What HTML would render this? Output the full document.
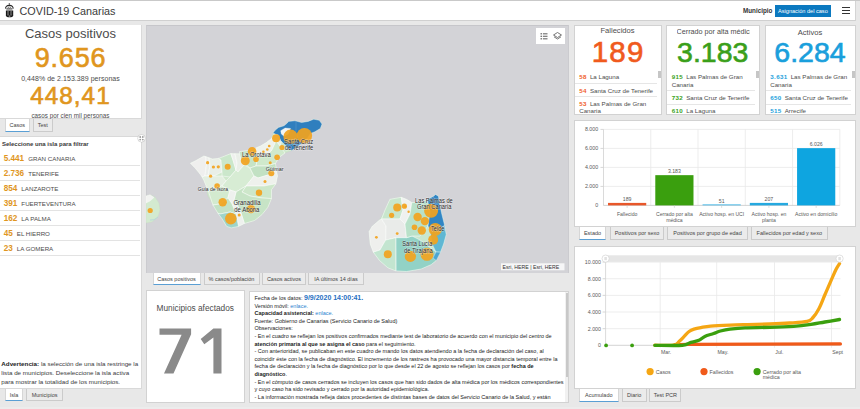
<!DOCTYPE html>
<html><head><meta charset="utf-8">
<style>
*{margin:0;padding:0;box-sizing:border-box}
html,body{width:860px;height:409px;overflow:hidden;background:#e8e8e8;font-family:"Liberation Sans",sans-serif;color:#4c4c4c}
.a{position:absolute}
.panel{position:absolute;background:#fff;border:1px solid #d2d2d2}
.c{text-align:center;white-space:nowrap}
.nw{white-space:nowrap}
.tab{position:absolute;height:12.5px;background:#ebebeb;border:1px solid #cbcbcb;border-top:none;font-size:5.5px;color:#444;text-align:center;line-height:12px;white-space:nowrap}
.tab.sel{background:#fff;border:none;border-left:1px solid #d6d6d6;border-right:1px solid #d6d6d6;border-bottom:1.5px solid #5a9fd4;line-height:12px;height:12.6px}
.big{-webkit-text-stroke:0.65px currentColor}
</style></head><body>

<div class="a" style="left:0;top:0;width:860px;height:1px;background:#c9c9c9"></div>
<div class="a" style="left:0;top:1px;width:856px;height:20px;background:#fff;border-right:1px solid #d4d4d4;border-bottom:1px solid #d0d0d0"></div>
<div class="a nw" style="left:19.5px;top:5px;font-size:10.8px;line-height:13px;color:#3a3a3a">COVID-19 Canarias</div>
<div class="a nw" style="left:743px;top:7px;font-size:6.3px;font-weight:bold;color:#333;line-height:8px">Municipio</div>
<div class="a" style="left:775px;top:4.5px;width:56px;height:12px;background:#0b79c0"></div>
<div class="a nw" style="left:778px;top:6.5px;font-size:5.6px;color:#fff;line-height:8px">Asignación del caso</div>
<div class="a" style="left:842px;top:6.8px;width:8px;height:1px;background:#333"></div>
<div class="a" style="left:842px;top:9.9px;width:8px;height:1px;background:#333"></div>
<div class="a" style="left:842px;top:12.9px;width:8px;height:1px;background:#333"></div>
<svg class="a" style="left:0;top:0" width="20" height="21" viewBox="0 0 20 21">
<path d="M9.35,3.2 V4.9 M8.7,3.9 H10" stroke="#333" stroke-width="0.6"/>
<path d="M5.6,8.6 Q5.3,5.6 9.35,5.4 Q13.4,5.6 13.1,8.6" fill="none" stroke="#262626" stroke-width="1.1"/>
<path d="M7.6,8.4 L8.35,7.1 L9.1,8.4 M9.6,8.4 L10.35,7.1 L11.1,8.4" fill="none" stroke="#555" stroke-width="0.6"/>
<rect x="6.3" y="8.5" width="6.1" height="0.9" fill="#1e1e1e"/>
<path d="M5.9,10.4 H13.2 V15.2 Q13.2,17.2 9.55,17.2 Q5.9,17.2 5.9,15.2 Z" fill="#161616"/>
<rect x="7.1" y="11.2" width="1.9" height="4.2" fill="#6e6e6e"/>
<rect x="10.2" y="11.2" width="1.9" height="4.2" fill="#6e6e6e"/>
<rect x="7.65" y="12" width="0.8" height="2.6" fill="#3a3a3a"/>
<rect x="10.75" y="12" width="0.8" height="2.6" fill="#3a3a3a"/>
<ellipse cx="9.55" cy="16.1" rx="1" ry="0.6" fill="#aaa"/>
</svg>


<div class="a" style="left:0;top:25px;width:141.5px;height:94px;background:#fff;border-right:1px solid #d9d9d9;border-bottom:1px solid #d9d9d9"></div>
<div class="a c" style="left:0;width:141px;top:26px;font-size:13px;line-height:16px;color:#4c4c4c">Casos positivos</div>
<div class="a c big" style="left:0;width:141px;top:43px;font-size:27px;line-height:30px;color:#e0961e;letter-spacing:0.8px">9.656</div>
<div class="a c" style="left:0;width:141px;top:73.7px;font-size:7px;line-height:9px;color:#4c4c4c;letter-spacing:0.05px">0,448% de 2.153.389 personas</div>
<div class="a c big" style="left:0;width:141px;top:82.3px;font-size:24.3px;line-height:28px;color:#e0961e;letter-spacing:1px">448,41</div>
<div class="a c" style="left:0;width:141px;top:112px;font-size:6.3px;line-height:8px;color:#4c4c4c">casos por cien mil personas</div>
<div class="tab sel" style="left:4.5px;top:119px;width:25.5px">Casos</div>
<div class="tab" style="left:32.5px;top:119px;width:20.5px">Test</div>
<div class="a" style="left:0;top:136px;width:141.5px;height:252.5px;background:#fff;border-top:1px solid #d9d9d9;border-right:1px solid #d9d9d9;border-bottom:1px solid #d9d9d9"></div>
<div class="a nw" style="left:2px;top:139.8px;font-size:6px;font-weight:bold;line-height:8px;color:#3a3a3a">Seleccione una isla para filtrar</div>
<div class="a nw" style="left:3.7px;top:153.5px;font-size:8.2px;line-height:9px"><b style="color:#e0961e">5.441</b><span style="font-size:6.2px;color:#4c4c4c;margin-left:4px">GRAN CANARIA</span></div>
<div class="a" style="left:0;top:165px;width:140px;height:1px;background:#e3e3e3"></div>
<div class="a nw" style="left:3.7px;top:168.5px;font-size:8.2px;line-height:9px"><b style="color:#e0961e">2.736</b><span style="font-size:6.2px;color:#4c4c4c;margin-left:4px">TENERIFE</span></div>
<div class="a" style="left:0;top:180px;width:140px;height:1px;background:#e3e3e3"></div>
<div class="a nw" style="left:3.7px;top:183.5px;font-size:8.2px;line-height:9px"><b style="color:#e0961e">854</b><span style="font-size:6.2px;color:#4c4c4c;margin-left:4px">LANZAROTE</span></div>
<div class="a" style="left:0;top:195px;width:140px;height:1px;background:#e3e3e3"></div>
<div class="a nw" style="left:3.7px;top:198.5px;font-size:8.2px;line-height:9px"><b style="color:#e0961e">391</b><span style="font-size:6.2px;color:#4c4c4c;margin-left:4px">FUERTEVENTURA</span></div>
<div class="a" style="left:0;top:210px;width:140px;height:1px;background:#e3e3e3"></div>
<div class="a nw" style="left:3.7px;top:213.5px;font-size:8.2px;line-height:9px"><b style="color:#e0961e">162</b><span style="font-size:6.2px;color:#4c4c4c;margin-left:4px">LA PALMA</span></div>
<div class="a" style="left:0;top:225px;width:140px;height:1px;background:#e3e3e3"></div>
<div class="a nw" style="left:3.7px;top:228.5px;font-size:8.2px;line-height:9px"><b style="color:#e0961e">45</b><span style="font-size:6.2px;color:#4c4c4c;margin-left:4px">EL HIERRO</span></div>
<div class="a" style="left:0;top:240px;width:140px;height:1px;background:#e3e3e3"></div>
<div class="a nw" style="left:3.7px;top:243.5px;font-size:8.2px;line-height:9px"><b style="color:#e0961e">23</b><span style="font-size:6.2px;color:#4c4c4c;margin-left:4px">LA GOMERA</span></div>
<div class="a" style="left:0;top:255px;width:140px;height:1px;background:#e3e3e3"></div>

<div class="a nw" style="left:1.3px;top:358.7px;font-size:6.25px;line-height:9.3px;color:#3a3a3a">
<b style="color:#222">Advertencia:</b> la selección de una isla restringe la<br>lista de municipios. Deseleccione la isla activa<br>para mostrar la totalidad de los municipios.</div>
<div class="tab sel" style="left:4.8px;top:388.5px;width:18.5px">Isla</div>
<div class="tab" style="left:25.8px;top:388.5px;width:37.7px">Municipios</div>


<div class="a" style="left:146px;top:25px;width:423px;height:247.5px;background:#d3d3d7;border-top:1px solid #c6c6ca;border-left:1px solid #cbcbcf;border-right:1px solid #cbcbcf"></div>
<div class="tab sel" style="left:152.5px;top:272.5px;width:48px">Casos positivos</div>
<div class="tab" style="left:203.5px;top:272.5px;width:56px">% casos/población</div>
<div class="tab" style="left:262px;top:272.5px;width:44px">Casos activos</div>
<div class="tab" style="left:308px;top:272.5px;width:56px">IA últimos 14 días</div>


<div class="panel" style="left:146px;top:290px;width:98.5px;height:112.5px"></div>
<div class="a c" style="left:146px;width:98.5px;top:302.5px;font-size:8.3px;line-height:11px;color:#4c4c4c">Municipios afectados</div>
<svg class="a" style="left:0;top:0" width="860" height="409" viewBox="0 0 860 409"><polygon points="159.5,328.5 191.1,328.5 191.1,334.2 173.5,373.6 164,373.6 181.6,334.7 159.5,334.7" fill="#8a8a8a"/><polygon points="213.4,328.5 221.5,328.5 221.5,373.6 213.4,373.6 213.4,337.6 204.3,344.2 200.7,339.1" fill="#8a8a8a"/></svg>
<div class="panel" style="left:249px;top:290.5px;width:320px;height:112px;overflow:hidden"><div style="position:absolute;left:4.5px;top:2.40px;font-size:5.5px;line-height:8px;white-space:nowrap;color:#222"><span style="color:#222">Fecha de los datos: </span><b style="color:#1f6fc2;font-size:7px">9/9/2020 14:00:41.</b></div>
<div style="position:absolute;left:4.5px;top:10.00px;font-size:5.5px;line-height:8px;white-space:nowrap;color:#222">Versión móvil: <span style="color:#2a7fd0">enlace.</span></div>
<div style="position:absolute;left:4.5px;top:17.60px;font-size:5.5px;line-height:8px;white-space:nowrap;color:#222"><b>Capacidad asistencial:</b> <span style="color:#2a7fd0">enlace.</span></div>
<div style="position:absolute;left:4.5px;top:25.20px;font-size:5.5px;line-height:8px;white-space:nowrap;color:#222">Fuente: Gobierno de Canarias (Servicio Canario de Salud)</div>
<div style="position:absolute;left:4.5px;top:32.80px;font-size:5.5px;line-height:8px;white-space:nowrap;color:#222">Observaciones:</div>
<div style="position:absolute;left:4.5px;top:40.40px;font-size:5.5px;line-height:8px;white-space:nowrap;color:#222">- En el cuadro se reflejan los positivos confirmados mediante test de laboratorio de acuerdo con el municipio del centro de</div>
<div style="position:absolute;left:4.5px;top:48.00px;font-size:5.5px;line-height:8px;white-space:nowrap;color:#222"><b>atención primaria al que se asigna el caso</b> para el seguimiento.</div>
<div style="position:absolute;left:4.5px;top:55.60px;font-size:5.5px;line-height:8px;white-space:nowrap;color:#222">- Con anterioridad, se publicaban en este cuadro de mando los datos atendiendo a la fecha de declaración del caso, al</div>
<div style="position:absolute;left:4.5px;top:63.20px;font-size:5.5px;line-height:8px;white-space:nowrap;color:#222">coincidir éste con la fecha de diagnóstico. El incremento de los rastreos ha provocado una mayor distancia temporal entre la</div>
<div style="position:absolute;left:4.5px;top:70.80px;font-size:5.5px;line-height:8px;white-space:nowrap;color:#222">fecha de declaración y la fecha de diagnóstico por lo que desde el 22 de agosto se reflejan los casos por <b>fecha de</b></div>
<div style="position:absolute;left:4.5px;top:78.40px;font-size:5.5px;line-height:8px;white-space:nowrap;color:#222"><b>diagnóstico</b>.</div>
<div style="position:absolute;left:4.5px;top:86.00px;font-size:5.5px;line-height:8px;white-space:nowrap;color:#222">- En el cómputo de casos cerrados se incluyen los casos que han sido dados de alta médica por los médicos correspondientes</div>
<div style="position:absolute;left:4.5px;top:93.60px;font-size:5.5px;line-height:8px;white-space:nowrap;color:#222">y cuyo caso ha sido revisado y cerrado por la autoridad epidemiológica.</div>
<div style="position:absolute;left:4.5px;top:101.20px;font-size:5.5px;line-height:8px;white-space:nowrap;color:#222">- La información mostrada refleja datos procedentes de distintas bases de datos del Servicio Canario de la Salud, y están</div>
<div style="position:absolute;right:0;top:0;width:3px;height:110px;background:#f1f1f1"></div>
<div style="position:absolute;right:0.5px;top:1px;width:2px;height:84px;background:#c8c8c8"></div></div>


<div class="panel" style="left:573.5px;top:25px;width:88px;height:89.5px"></div>
<div class="panel" style="left:666px;top:25px;width:93.5px;height:89.5px"></div>
<div class="panel" style="left:764.5px;top:25px;width:91px;height:89.5px"></div>
<div class="a c" style="left:573.5px;width:88px;top:26.2px;font-size:7.6px;line-height:9px">Fallecidos</div>
<div class="a c big" style="left:573.5px;width:88px;top:36.3px;font-size:29.5px;line-height:32px;color:#f05a1e;letter-spacing:1.2px;padding-left:1.2px">189</div>
<div class="a nw" style="left:676.6px;width:73.6px;top:27.3px;font-size:7.2px;line-height:9px;overflow:hidden">Cerrado por alta médica</div>
<div class="a c big" style="left:666px;width:93.5px;top:36px;font-size:28.5px;line-height:32px;color:#3a9f1a">3.183</div>
<div class="a c" style="left:764.5px;width:91px;top:28px;font-size:7.6px;line-height:9px">Activos</div>
<div class="a c big" style="left:764.5px;width:91px;top:36px;font-size:28.5px;line-height:32px;color:#1a9fdc">6.284</div>
<div class="a" style="left:574.5px;top:70px;width:86px;height:44px;overflow:hidden"><div style="position:absolute;left:4.7px;top:3.45px;width:76px;font-size:6.2px;line-height:7.5px;color:#4c4c4c"><span style="color:#f05a1e;letter-spacing:0.4px;font-weight:bold">58</span><span style="margin-left:3px">La Laguna</span></div><div style="position:absolute;left:0;top:12.75px;width:82px;height:1px;background:#e6e6e6"></div><div style="position:absolute;left:4.7px;top:16.7px;width:76px;font-size:6.2px;line-height:7.5px;color:#4c4c4c"><span style="color:#f05a1e;letter-spacing:0.4px;font-weight:bold">54</span><span style="margin-left:3px">Santa Cruz de Tenerife</span></div><div style="position:absolute;left:0;top:26.0px;width:82px;height:1px;background:#e6e6e6"></div><div style="position:absolute;left:4.7px;top:29.95px;width:76px;font-size:6.2px;line-height:7.5px;color:#4c4c4c"><span style="color:#f05a1e;letter-spacing:0.4px;font-weight:bold">53</span><span style="margin-left:3px">Las Palmas de Gran Canaria</span></div><div style="position:absolute;left:0;top:46.75px;width:82px;height:1px;background:#e6e6e6"></div><div style="position:absolute;left:83px;top:1px;width:3px;height:7px;background:#c6c6c6"></div></div>
<div class="a" style="left:667px;top:70px;width:91.5px;height:44px;overflow:hidden"><div style="position:absolute;left:4.7px;top:3.45px;width:81.5px;font-size:6.2px;line-height:7.5px;color:#4c4c4c"><span style="color:#3a9f1a;letter-spacing:0.4px;font-weight:bold">915</span><span style="margin-left:3px">Las Palmas de Gran Canaria</span></div><div style="position:absolute;left:0;top:20.25px;width:87.5px;height:1px;background:#e6e6e6"></div><div style="position:absolute;left:4.7px;top:24.2px;width:81.5px;font-size:6.2px;line-height:7.5px;color:#4c4c4c"><span style="color:#3a9f1a;letter-spacing:0.4px;font-weight:bold">732</span><span style="margin-left:3px">Santa Cruz de Tenerife</span></div><div style="position:absolute;left:0;top:33.5px;width:87.5px;height:1px;background:#e6e6e6"></div><div style="position:absolute;left:4.7px;top:37.45px;width:81.5px;font-size:6.2px;line-height:7.5px;color:#4c4c4c"><span style="color:#3a9f1a;letter-spacing:0.4px;font-weight:bold">610</span><span style="margin-left:3px">La Laguna</span></div><div style="position:absolute;left:0;top:46.75px;width:87.5px;height:1px;background:#e6e6e6"></div><div style="position:absolute;left:88.5px;top:1px;width:3px;height:7px;background:#c6c6c6"></div></div>
<div class="a" style="left:765.5px;top:70px;width:89px;height:44px;overflow:hidden"><div style="position:absolute;left:4.7px;top:3.45px;width:79px;font-size:6.2px;line-height:7.5px;color:#4c4c4c"><span style="color:#1a9fdc;letter-spacing:0.4px;font-weight:bold">3.631</span><span style="margin-left:3px">Las Palmas de Gran Canaria</span></div><div style="position:absolute;left:0;top:20.25px;width:85px;height:1px;background:#e6e6e6"></div><div style="position:absolute;left:4.7px;top:24.2px;width:79px;font-size:6.2px;line-height:7.5px;color:#4c4c4c"><span style="color:#1a9fdc;letter-spacing:0.4px;font-weight:bold">650</span><span style="margin-left:3px">Santa Cruz de Tenerife</span></div><div style="position:absolute;left:0;top:33.5px;width:85px;height:1px;background:#e6e6e6"></div><div style="position:absolute;left:4.7px;top:37.45px;width:79px;font-size:6.2px;line-height:7.5px;color:#4c4c4c"><span style="color:#1a9fdc;letter-spacing:0.4px;font-weight:bold">515</span><span style="margin-left:3px">Arrecife</span></div><div style="position:absolute;left:0;top:46.75px;width:85px;height:1px;background:#e6e6e6"></div><div style="position:absolute;left:86px;top:1px;width:3px;height:7px;background:#c6c6c6"></div></div>


<div class="panel" style="left:573.5px;top:119.5px;width:282px;height:107.5px"></div>
<div class="tab sel" style="left:579px;top:227px;width:27px">Estado</div>
<div class="tab" style="left:610px;top:227px;width:54px">Positivos por sexo</div>
<div class="tab" style="left:667px;top:227px;width:81px">Positivos por grupo de edad</div>
<div class="tab" style="left:751px;top:227px;width:76.5px">Fallecidos por edad y sexo</div>


<div class="panel" style="left:573.5px;top:245.5px;width:282px;height:143.5px"></div>
<div class="tab sel" style="left:579px;top:389px;width:39.5px">Acumulado</div>
<div class="tab" style="left:622px;top:389px;width:24.5px">Diario</div>
<div class="tab" style="left:649.4px;top:389px;width:32px">Test PCR</div>

<div class="a" style="left:0;top:407px;width:860px;height:2px;background:#ececec"></div>
<svg class="a" style="left:0;top:0" width="860" height="409" viewBox="0 0 860 409"><defs><clipPath id="mc"><rect x="146" y="25" width="423" height="247.5"/></clipPath></defs>
<g clip-path="url(#mc)">
<polygon points="190.4,163.3 196.0,160.5 203.9,156.0 205.7,156.6 212.4,159.0 218.6,158.4 224.7,156.0 230.8,153.6 239.3,153.8 245.0,152.0 247.7,150.4 254.6,148.5 260.4,146.0 266.3,142.6 271.2,138.7 273.0,132.9 275.2,130.2 278.5,127.4 284.0,125.8 287.3,123.0 288.4,121.4 295.0,120.8 301.6,122.5 308.2,121.4 313.7,119.2 319.2,120.3 322.0,124.1 320.3,128.5 314.8,131.8 310.4,133.5 308.2,137.3 303.8,141.7 295.0,148.3 291.7,150.5 285.0,153.0 279.0,157.5 275.5,163.5 276.5,170.0 277.5,176.0 275.9,183.8 271.5,189.7 271.5,198.5 267.9,207.3 262.0,214.6 254.6,220.5 244.4,223.5 238.5,226.4 231.2,227.9 226.7,226.4 222.3,219.1 217.9,213.2 212.9,205.0 207.6,195.0 206.3,186.6 203.9,180.5 200.2,174.3 195.3,168.2" fill="#cfe8cc" stroke="#c4d9c2" stroke-width="0.4" />
<polygon points="190.4,163.3 196.0,160.5 203.9,156.0 205.7,156.6 206.5,165.0 205.0,176.0 202.0,177.0 200.2,174.3 195.3,168.2" fill="#efefee" stroke="#ffffff" stroke-width="0.5" />
<polygon points="205.7,156.6 209.0,157.8 210.0,166.0 208.0,176.0 205.0,176.0 206.5,165.0" fill="#eceeeb" stroke="#ffffff" stroke-width="0.5" />
<polygon points="209.0,157.8 212.4,159.0 218.6,158.4 221.0,160.0 222.0,172.0 214.0,176.0 208.0,176.0 210.0,166.0" fill="#e9efe7" stroke="#ffffff" stroke-width="0.5" />
<polygon points="218.6,158.4 224.7,156.0 230.8,153.6 233.0,160.0 236.0,170.0 230.0,177.0 222.0,176.0 222.0,172.0 221.0,160.0" fill="#cbe7cb" stroke="#ffffff" stroke-width="0.5" />
<polygon points="230.8,153.6 235.0,153.7 237.0,163.0 236.0,170.0 233.0,160.0" fill="#eef0ed" stroke="#ffffff" stroke-width="0.5" />
<polygon points="235.0,153.7 239.3,153.8 245.0,152.0 244.0,165.0 238.0,172.0 236.0,170.0 237.0,163.0" fill="#eaefe8" stroke="#ffffff" stroke-width="0.5" />
<polygon points="202.0,177.0 205.0,176.0 214.0,176.0 222.0,176.0 226.0,181.0 222.0,186.0 208.5,191.3 206.3,186.6 203.9,180.5" fill="#e4efe1" stroke="#ffffff" stroke-width="0.5" />
<polygon points="208.5,191.3 222.0,186.0 230.0,190.0 228.0,198.0 220.0,204.0 212.9,205.0" fill="#d3eacf" stroke="#ffffff" stroke-width="0.5" />
<polygon points="226.0,181.0 230.0,177.0 236.0,170.0 238.0,172.0 244.0,165.0 250.0,168.0 254.0,176.0 246.0,186.0 236.0,192.0 230.0,190.0 222.0,186.0" fill="#d7ecd4" stroke="#ffffff" stroke-width="0.5" />
<polygon points="239.3,151.7 247.7,150.4 254.6,148.5 258.0,156.0 256.0,166.0 250.0,168.0 241.0,160.0" fill="#c7e4c7" stroke="#ffffff" stroke-width="0.5" />
<polygon points="254.6,148.5 260.4,146.0 266.3,142.6 271.2,138.7 276.0,141.0 272.0,150.0 266.0,156.0 258.0,156.0" fill="#eef2ec" stroke="#ffffff" stroke-width="0.5" />
<polygon points="271.2,138.7 274.1,134.8 277.1,130.9 281.0,127.0 283.0,137.0 280.0,146.0 276.0,141.0" fill="#e6f0e3" stroke="#ffffff" stroke-width="0.5" />
<polygon points="258.0,156.0 266.0,156.0 272.0,150.0 276.0,141.0 280.0,146.0 285.0,153.0 279.0,157.5 275.5,163.5 266.0,166.0 256.0,166.0" fill="#d0e9cc" stroke="#ffffff" stroke-width="0.5" />
<polygon points="256.0,166.0 266.0,166.0 275.5,163.5 276.5,170.0 268.0,175.0 258.0,178.0 254.0,176.0 250.0,168.0" fill="#c2e1c3" stroke="#ffffff" stroke-width="0.5" />
<polygon points="254.0,176.0 258.0,178.0 268.0,175.0 276.5,170.0 277.5,176.0 275.9,183.8 264.0,186.0 254.0,186.0 246.0,186.0" fill="#eef1ec" stroke="#ffffff" stroke-width="0.5" />
<polygon points="246.0,186.0 254.0,186.0 264.0,186.0 275.9,183.8 271.5,189.7 271.5,198.5 262.0,198.0 250.0,196.0 242.0,192.0" fill="#cde7ca" stroke="#ffffff" stroke-width="0.5" />
<polygon points="236.0,192.0 246.0,186.0 242.0,192.0 250.0,196.0 262.0,198.0 271.5,198.5 267.9,207.3 262.0,214.6 254.6,220.5 244.4,223.5 240.0,210.0 234.0,200.0" fill="#c7e4c6" stroke="#ffffff" stroke-width="0.5" />
<polygon points="228.0,198.0 230.0,190.0 236.0,192.0 234.0,200.0 240.0,210.0 244.4,223.5 238.5,226.4 236.0,214.0 232.0,204.0" fill="#eef1ee" stroke="#ffffff" stroke-width="0.5" />
<polygon points="212.9,205.0 220.0,204.0 228.0,198.0 232.0,204.0 236.0,214.0 230.0,212.0 220.0,214.0 217.9,213.2" fill="#c3e2c6" stroke="#ffffff" stroke-width="0.5" />
<polygon points="217.9,213.2 220.0,214.0 230.0,212.0 236.0,214.0 238.5,226.4 231.2,227.9 226.7,226.4 222.3,219.1" fill="#9fd4c9" stroke="#ffffff" stroke-width="0.5" />
<polygon points="273.0,132.9 275.2,130.2 278.5,127.4 284.0,125.8 287.3,123.0 288.4,121.4 295.0,120.8 301.6,122.5 308.2,121.4 313.7,119.2 319.2,120.3 322.0,124.1 320.3,128.5 314.8,131.8 310.4,133.5 308.2,137.3 303.8,141.7 295.0,148.3 291.7,150.5 288.4,148.3 285.1,145.0 280.7,140.6 278.5,135.1 275.2,134.0" fill="#2f7fbe" stroke="#ffffff" stroke-width="0.35" />
<line x1="296" y1="121" x2="296" y2="132" stroke="#6aa5d6" stroke-width="0.4"/>
<polygon points="280.7,130.7 285.1,128.0 290.6,128.5 288.4,134.0 284.0,136.2 281.3,134.0" fill="#f3f5f3" stroke="#ffffff" stroke-width="0.3" />
<polygon points="146.0,196.0 150.0,194.7 155.0,197.0 159.0,203.0 160.0,210.0 158.0,217.0 152.0,222.0 146.0,223.0" fill="#d3ead0" stroke="#c9dcc6" stroke-width="0.4" />
<polygon points="146.0,196.0 150.0,194.7 154.0,197.5 150.0,201.0 146.0,203.0" fill="#f2f3f1" stroke="#ffffff" stroke-width="0.35" />
<path d="M150,220 Q154,221 158,217" stroke="#b9d9d9" stroke-width="1" fill="none"/>
<polygon points="389.9,199.3 401.3,197.3 406.5,199.3 411.8,202.5 421.1,202.5 427.4,199.4 433.6,196.2 435.5,194.5 438.4,196.2 439.4,202.4 441.5,212.8 444.6,225.3 446.2,234.6 443.6,244.0 440.5,252.2 436.3,260.5 431.1,264.7 421.1,269.0 406.6,271.5 396.1,270.9 387.8,267.8 379.5,260.5 373.3,252.2 370.2,243.9 369.1,231.5 372.3,226.3 379.5,220.1 384.7,210.7" fill="#c9e7cf" stroke="#c4d9c2" stroke-width="0.4" />
<polygon points="389.9,199.3 401.3,197.3 403.0,210.0 400.0,219.0 388.0,219.0 381.6,219.0 384.7,210.7" fill="#c8e6cc" stroke="#ffffff" stroke-width="0.5" />
<polygon points="401.3,197.3 406.5,199.3 411.8,202.5 410.0,214.0 405.0,224.0 400.0,219.0 403.0,210.0" fill="#eff1ef" stroke="#ffffff" stroke-width="0.5" />
<polygon points="369.1,231.5 372.3,226.3 379.5,220.1 381.6,219.0 386.0,226.0 385.7,240.0 380.0,250.0 373.3,252.2 370.2,243.9" fill="#eeefed" stroke="#ffffff" stroke-width="0.5" />
<polygon points="381.6,219.0 388.0,219.0 400.0,219.0 405.0,224.0 406.5,237.7 396.0,237.7 386.0,240.0 385.7,240.0 386.0,226.0" fill="#e9ebe9" stroke="#ffffff" stroke-width="0.5" />
<polygon points="373.3,252.2 380.0,250.0 385.7,240.0 386.0,240.0 396.0,237.7 396.0,271.0 387.8,267.8 379.5,260.5" fill="#c3e5d0" stroke="#ffffff" stroke-width="0.5" />
<polygon points="396.0,237.7 406.5,237.7 412.0,236.0 420.0,240.0 428.0,246.0 436.0,252.0 436.3,260.5 431.1,264.7 421.1,269.0 406.6,271.5 396.1,270.9" fill="#92d2c6" stroke="#ffffff" stroke-width="0.5" />
<polygon points="410.0,214.0 411.8,202.5 421.1,202.5 427.4,199.4 430.0,212.0 428.0,226.0 420.0,236.0 412.0,236.0 406.5,237.7 405.0,224.0" fill="#b9e1c9" stroke="#ffffff" stroke-width="0.5" />
<polygon points="430.0,230.0 438.0,230.0 444.6,225.3 446.2,234.6 443.6,244.0 440.5,252.2 436.0,252.0 432.0,244.0" fill="#5fb7d3" stroke="#ffffff" stroke-width="0.4" />
<polygon points="427.4,199.4 433.6,196.2 435.5,194.5 438.4,196.2 439.4,202.4 441.5,212.8 444.6,225.3 438.0,230.0 430.0,230.0 428.0,226.0 430.0,212.0" fill="#3085c4" stroke="#ffffff" stroke-width="0.4" />
<polygon points="436.3,260.5 440.5,252.2 436.0,252.0 433.0,258.0" fill="#4aa6d2" stroke="#ffffff" stroke-width="0.3" />
<circle cx="290.6" cy="136.8" r="7.2" fill="#f2a31e" fill-opacity="0.92"/>
<circle cx="304.4" cy="135.7" r="7.7" fill="#f2a31e" fill-opacity="0.92"/>
<circle cx="276.1" cy="138.2" r="4" fill="#f2a31e" fill-opacity="0.92"/>
<circle cx="282" cy="147.5" r="2.6" fill="#f2a31e" fill-opacity="0.92"/>
<circle cx="252.1" cy="151.4" r="4.3" fill="#f2a31e" fill-opacity="0.92"/>
<circle cx="245.3" cy="160.7" r="4.5" fill="#f2a31e" fill-opacity="0.92"/>
<circle cx="256" cy="159.2" r="2.8" fill="#f2a31e" fill-opacity="0.92"/>
<circle cx="277.1" cy="157.3" r="2.8" fill="#f2a31e" fill-opacity="0.92"/>
<circle cx="269.2" cy="146" r="1.3" fill="#f2a31e" fill-opacity="0.92"/>
<circle cx="267.3" cy="149.5" r="1.3" fill="#f2a31e" fill-opacity="0.92"/>
<circle cx="263.4" cy="151.9" r="1.3" fill="#f2a31e" fill-opacity="0.92"/>
<circle cx="270.2" cy="162.7" r="1.5" fill="#f2a31e" fill-opacity="0.92"/>
<circle cx="271.3" cy="173.2" r="3" fill="#f2a31e" fill-opacity="0.92"/>
<circle cx="265" cy="181.5" r="1.5" fill="#f2a31e" fill-opacity="0.92"/>
<circle cx="259" cy="192.7" r="3.2" fill="#f2a31e" fill-opacity="0.92"/>
<circle cx="251" cy="209" r="4.2" fill="#f2a31e" fill-opacity="0.92"/>
<circle cx="207.6" cy="162.7" r="1.6" fill="#f2a31e" fill-opacity="0.92"/>
<circle cx="213.4" cy="167" r="1.6" fill="#f2a31e" fill-opacity="0.92"/>
<circle cx="218.3" cy="166.8" r="1.6" fill="#f2a31e" fill-opacity="0.92"/>
<circle cx="227.7" cy="166.8" r="3" fill="#f2a31e" fill-opacity="0.92"/>
<circle cx="210.6" cy="176.2" r="1.6" fill="#f2a31e" fill-opacity="0.92"/>
<circle cx="217.1" cy="186" r="2.8" fill="#f2a31e" fill-opacity="0.92"/>
<circle cx="222.7" cy="202.3" r="4.2" fill="#f2a31e" fill-opacity="0.92"/>
<circle cx="230.8" cy="218.6" r="5.8" fill="#f2a31e" fill-opacity="0.92"/>
<circle cx="239.2" cy="214.9" r="1.5" fill="#f2a31e" fill-opacity="0.92"/>
<circle cx="150.2" cy="210.5" r="2.6" fill="#f2a31e" fill-opacity="0.92"/>
<circle cx="397.2" cy="207.6" r="4" fill="#f2a31e" fill-opacity="0.92"/>
<circle cx="404.4" cy="206.2" r="2.6" fill="#f2a31e" fill-opacity="0.92"/>
<circle cx="391.6" cy="215.3" r="2.6" fill="#f2a31e" fill-opacity="0.92"/>
<circle cx="408.6" cy="211.8" r="1.2" fill="#f2a31e" fill-opacity="0.92"/>
<circle cx="405.2" cy="206.6" r="1.0" fill="#f2a31e" fill-opacity="0.92"/>
<circle cx="417.6" cy="217" r="4.2" fill="#f2a31e" fill-opacity="0.92"/>
<circle cx="424.9" cy="221.1" r="4.2" fill="#f2a31e" fill-opacity="0.92"/>
<circle cx="431.1" cy="210.7" r="7" fill="#f2a31e" fill-opacity="0.92"/>
<circle cx="414.5" cy="227.3" r="2.8" fill="#f2a31e" fill-opacity="0.92"/>
<circle cx="421.8" cy="230.5" r="4.2" fill="#f2a31e" fill-opacity="0.92"/>
<circle cx="435.3" cy="229.4" r="6.5" fill="#f2a31e" fill-opacity="0.92"/>
<circle cx="433.2" cy="239.8" r="5" fill="#f2a31e" fill-opacity="0.92"/>
<circle cx="427" cy="254.3" r="6.5" fill="#f2a31e" fill-opacity="0.92"/>
<circle cx="410.4" cy="256.4" r="5.6" fill="#f2a31e" fill-opacity="0.92"/>
<circle cx="387.8" cy="254.3" r="4" fill="#f2a31e" fill-opacity="0.92"/>
<circle cx="376.4" cy="237.3" r="1.4" fill="#f2a31e" fill-opacity="0.92"/>
<circle cx="397.2" cy="233.6" r="1.4" fill="#f2a31e" fill-opacity="0.92"/>
<text x="284" y="143.6" font-family="Liberation Sans" font-size="6.5" textLength="29.2" lengthAdjust="spacingAndGlyphs" fill="none" stroke="#ffffff" stroke-opacity="0.5" stroke-width="0.9" stroke-linejoin="round">Santa Cruz</text><text x="284" y="143.6" font-family="Liberation Sans" font-size="6.5" textLength="29.2" lengthAdjust="spacingAndGlyphs" fill="#262626">Santa Cruz</text>
<text x="284.7" y="149.6" font-family="Liberation Sans" font-size="6.5" textLength="28.6" lengthAdjust="spacingAndGlyphs" fill="none" stroke="#ffffff" stroke-opacity="0.5" stroke-width="0.9" stroke-linejoin="round">de Tenerife</text><text x="284.7" y="149.6" font-family="Liberation Sans" font-size="6.5" textLength="28.6" lengthAdjust="spacingAndGlyphs" fill="#262626">de Tenerife</text>
<text x="242" y="157.2" font-family="Liberation Sans" font-size="6.5" textLength="28.7" lengthAdjust="spacingAndGlyphs" fill="none" stroke="#ffffff" stroke-opacity="0.5" stroke-width="0.9" stroke-linejoin="round">La Orotava</text><text x="242" y="157.2" font-family="Liberation Sans" font-size="6.5" textLength="28.7" lengthAdjust="spacingAndGlyphs" fill="#262626">La Orotava</text>
<text x="265.7" y="171.3" font-family="Liberation Sans" font-size="5.6" textLength="17.8" lengthAdjust="spacingAndGlyphs" fill="none" stroke="#ffffff" stroke-opacity="0.5" stroke-width="0.9" stroke-linejoin="round">Güímar</text><text x="265.7" y="171.3" font-family="Liberation Sans" font-size="5.6" textLength="17.8" lengthAdjust="spacingAndGlyphs" fill="#262626">Güímar</text>
<text x="197.8" y="191.3" font-family="Liberation Sans" font-size="5.6" textLength="30.2" lengthAdjust="spacingAndGlyphs" fill="none" stroke="#ffffff" stroke-opacity="0.5" stroke-width="0.9" stroke-linejoin="round">Guía de Isora</text><text x="197.8" y="191.3" font-family="Liberation Sans" font-size="5.6" textLength="30.2" lengthAdjust="spacingAndGlyphs" fill="#262626">Guía de Isora</text>
<text x="233.4" y="205.2" font-family="Liberation Sans" font-size="6.5" textLength="27.2" lengthAdjust="spacingAndGlyphs" fill="none" stroke="#ffffff" stroke-opacity="0.5" stroke-width="0.9" stroke-linejoin="round">Granadilla</text><text x="233.4" y="205.2" font-family="Liberation Sans" font-size="6.5" textLength="27.2" lengthAdjust="spacingAndGlyphs" fill="#262626">Granadilla</text>
<text x="234.3" y="211.7" font-family="Liberation Sans" font-size="6.5" textLength="25" lengthAdjust="spacingAndGlyphs" fill="none" stroke="#ffffff" stroke-opacity="0.5" stroke-width="0.9" stroke-linejoin="round">de Abona</text><text x="234.3" y="211.7" font-family="Liberation Sans" font-size="6.5" textLength="25" lengthAdjust="spacingAndGlyphs" fill="#262626">de Abona</text>
<text x="415.1" y="203.3" font-family="Liberation Sans" font-size="6.5" textLength="37.7" lengthAdjust="spacingAndGlyphs" fill="none" stroke="#ffffff" stroke-opacity="0.5" stroke-width="0.9" stroke-linejoin="round">Las Palmas de</text><text x="415.1" y="203.3" font-family="Liberation Sans" font-size="6.5" textLength="37.7" lengthAdjust="spacingAndGlyphs" fill="#262626">Las Palmas de</text>
<text x="417" y="209.2" font-family="Liberation Sans" font-size="6.5" textLength="34.4" lengthAdjust="spacingAndGlyphs" fill="none" stroke="#ffffff" stroke-opacity="0.5" stroke-width="0.9" stroke-linejoin="round">Gran Canaria</text><text x="417" y="209.2" font-family="Liberation Sans" font-size="6.5" textLength="34.4" lengthAdjust="spacingAndGlyphs" fill="#262626">Gran Canaria</text>
<text x="431.1" y="230.6" font-family="Liberation Sans" font-size="6.5" textLength="13.3" lengthAdjust="spacingAndGlyphs" fill="none" stroke="#ffffff" stroke-opacity="0.5" stroke-width="0.9" stroke-linejoin="round">Telde</text><text x="431.1" y="230.6" font-family="Liberation Sans" font-size="6.5" textLength="13.3" lengthAdjust="spacingAndGlyphs" fill="#262626">Telde</text>
<text x="402.3" y="245.9" font-family="Liberation Sans" font-size="6.5" textLength="30" lengthAdjust="spacingAndGlyphs" fill="none" stroke="#ffffff" stroke-opacity="0.5" stroke-width="0.9" stroke-linejoin="round">Santa Lucía</text><text x="402.3" y="245.9" font-family="Liberation Sans" font-size="6.5" textLength="30" lengthAdjust="spacingAndGlyphs" fill="#262626">Santa Lucía</text>
<text x="404" y="252.6" font-family="Liberation Sans" font-size="6.5" textLength="28.6" lengthAdjust="spacingAndGlyphs" fill="none" stroke="#ffffff" stroke-opacity="0.5" stroke-width="0.9" stroke-linejoin="round">de Tirajana</text><text x="404" y="252.6" font-family="Liberation Sans" font-size="6.5" textLength="28.6" lengthAdjust="spacingAndGlyphs" fill="#262626">de Tirajana</text>
<rect x="501" y="263.3" width="63.5" height="7" fill="#ffffff" fill-opacity="0.8"/>
<text x="502.5" y="269" font-family="Liberation Sans" font-size="5.2" fill="#333">Esri, HERE | Esri, HERE</text>
</g>
<rect x="536" y="28" width="29" height="16" fill="#ffffff"/>
<rect x="540.5" y="33.2" width="1.6" height="1.2" fill="#666"/><rect x="543" y="33.2" width="4.5" height="1.2" fill="#777"/>
<rect x="540.5" y="35.7" width="1.6" height="1.2" fill="#666"/><rect x="543" y="35.7" width="4.5" height="1.2" fill="#777"/>
<rect x="540.5" y="38.2" width="1.6" height="1.2" fill="#666"/><rect x="543" y="38.2" width="4.5" height="1.2" fill="#777"/>
<path d="M557.5,32.5 L561.5,35 L557.5,37.5 L553.5,35 Z" fill="none" stroke="#666" stroke-width="0.9"/>
<path d="M554,36.8 L557.5,39 L561,36.8" fill="none" stroke="#666" stroke-width="0.9"/>
<circle cx="141.5" cy="138.3" r="3.8" fill="#ffffff" stroke="#b5b5b5" stroke-width="0.5"/>
<path d="M141.5,135.2 V141.4 M138.4,138.3 H144.6" stroke="#ffffff" stroke-width="1.1"/>
<circle cx="140.2" cy="137" r="0.9" fill="#9a9a9a"/><circle cx="142.8" cy="137" r="0.9" fill="#9a9a9a"/><circle cx="140.2" cy="139.6" r="0.9" fill="#9a9a9a"/><circle cx="142.8" cy="139.6" r="0.9" fill="#9a9a9a"/><line x1="603.5" y1="186.40" x2="839.8" y2="186.40" stroke="#e8e8e8" stroke-width="0.8"/>
<line x1="600.5" y1="186.40" x2="603.5" y2="186.40" stroke="#bbb" stroke-width="0.6"/>
<text x="598.2" y="188.30" font-family="Liberation Sans" font-size="5.3" fill="#595959" text-anchor="end">2.000</text>
<line x1="603.5" y1="167.40" x2="839.8" y2="167.40" stroke="#e8e8e8" stroke-width="0.8"/>
<line x1="600.5" y1="167.40" x2="603.5" y2="167.40" stroke="#bbb" stroke-width="0.6"/>
<text x="598.2" y="169.30" font-family="Liberation Sans" font-size="5.3" fill="#595959" text-anchor="end">4.000</text>
<line x1="603.5" y1="148.40" x2="839.8" y2="148.40" stroke="#e8e8e8" stroke-width="0.8"/>
<line x1="600.5" y1="148.40" x2="603.5" y2="148.40" stroke="#bbb" stroke-width="0.6"/>
<text x="598.2" y="150.30" font-family="Liberation Sans" font-size="5.3" fill="#595959" text-anchor="end">6.000</text>
<line x1="603.5" y1="129.40" x2="839.8" y2="129.40" stroke="#e8e8e8" stroke-width="0.8"/>
<line x1="600.5" y1="129.40" x2="603.5" y2="129.40" stroke="#bbb" stroke-width="0.6"/>
<text x="598.2" y="131.30" font-family="Liberation Sans" font-size="5.3" fill="#595959" text-anchor="end">8.000</text>
<text x="598.2" y="207.30" font-family="Liberation Sans" font-size="5.3" fill="#595959" text-anchor="end">0</text>
<line x1="650.76" y1="129.40" x2="650.76" y2="205.4" stroke="#e8e8e8" stroke-width="0.8"/>
<line x1="698.02" y1="129.40" x2="698.02" y2="205.4" stroke="#e8e8e8" stroke-width="0.8"/>
<line x1="745.28" y1="129.40" x2="745.28" y2="205.4" stroke="#e8e8e8" stroke-width="0.8"/>
<line x1="792.54" y1="129.40" x2="792.54" y2="205.4" stroke="#e8e8e8" stroke-width="0.8"/>
<line x1="839.80" y1="129.40" x2="839.80" y2="205.4" stroke="#e8e8e8" stroke-width="0.8"/>
<line x1="603.5" y1="129.40" x2="603.5" y2="205.4" stroke="#d0d0d0" stroke-width="0.8"/>
<line x1="603.5" y1="205.40" x2="839.8" y2="205.40" stroke="#c8c8c8" stroke-width="0.8"/>
<rect x="608.03" y="202.90" width="38.2" height="2.50" fill="#e8572a"/>
<text x="627.13" y="201.10" font-family="Liberation Sans" font-size="5.2" fill="#595959" text-anchor="middle">189</text>
<line x1="627.13" y1="205.4" x2="627.13" y2="207.9" stroke="#c8c8c8" stroke-width="0.6"/>
<text x="627.13" y="216.20" font-family="Liberation Sans" font-size="5.1" fill="#595959" text-anchor="middle">Fallecido</text>
<rect x="655.29" y="175.16" width="38.2" height="30.24" fill="#3a9f0e"/>
<text x="674.39" y="173.36" font-family="Liberation Sans" font-size="5.2" fill="#595959" text-anchor="middle">3.183</text>
<line x1="674.39" y1="205.4" x2="674.39" y2="207.9" stroke="#c8c8c8" stroke-width="0.6"/>
<text x="674.39" y="216.20" font-family="Liberation Sans" font-size="5.1" fill="#595959" text-anchor="middle">Cerrado por alta</text>
<text x="674.39" y="222.00" font-family="Liberation Sans" font-size="5.1" fill="#595959" text-anchor="middle">médica</text>
<rect x="702.55" y="204.30" width="38.2" height="1.10" fill="#5cc0ea"/>
<text x="721.65" y="202.50" font-family="Liberation Sans" font-size="5.2" fill="#595959" text-anchor="middle">51</text>
<line x1="721.65" y1="205.4" x2="721.65" y2="207.9" stroke="#c8c8c8" stroke-width="0.6"/>
<text x="721.65" y="216.20" font-family="Liberation Sans" font-size="5.1" fill="#595959" text-anchor="middle">Activo hosp. en UCI</text>
<rect x="749.81" y="202.90" width="38.2" height="2.50" fill="#25a9e0"/>
<text x="768.91" y="201.10" font-family="Liberation Sans" font-size="5.2" fill="#595959" text-anchor="middle">207</text>
<line x1="768.91" y1="205.4" x2="768.91" y2="207.9" stroke="#c8c8c8" stroke-width="0.6"/>
<text x="768.91" y="216.20" font-family="Liberation Sans" font-size="5.1" fill="#595959" text-anchor="middle">Activo hosp. en</text>
<text x="768.91" y="222.00" font-family="Liberation Sans" font-size="5.1" fill="#595959" text-anchor="middle">planta</text>
<rect x="797.07" y="148.15" width="38.2" height="57.25" fill="#0ea5e0"/>
<text x="816.17" y="146.35" font-family="Liberation Sans" font-size="5.2" fill="#595959" text-anchor="middle">6.026</text>
<line x1="816.17" y1="205.4" x2="816.17" y2="207.9" stroke="#c8c8c8" stroke-width="0.6"/>
<text x="816.17" y="216.20" font-family="Liberation Sans" font-size="5.1" fill="#595959" text-anchor="middle">Activo en domicilio</text>
<rect x="604" y="255.3" width="236.5" height="6.6" fill="#e6e6e6"/>
<line x1="605.6" y1="328.66" x2="840.5" y2="328.66" stroke="#e8e8e8" stroke-width="0.8"/>
<line x1="602.6" y1="328.66" x2="605.6" y2="328.66" stroke="#bbb" stroke-width="0.6"/>
<text x="601" y="330.56" font-family="Liberation Sans" font-size="5.3" fill="#595959" text-anchor="end">2.000</text>
<line x1="605.6" y1="312.02" x2="840.5" y2="312.02" stroke="#e8e8e8" stroke-width="0.8"/>
<line x1="602.6" y1="312.02" x2="605.6" y2="312.02" stroke="#bbb" stroke-width="0.6"/>
<text x="601" y="313.92" font-family="Liberation Sans" font-size="5.3" fill="#595959" text-anchor="end">4.000</text>
<line x1="605.6" y1="295.38" x2="840.5" y2="295.38" stroke="#e8e8e8" stroke-width="0.8"/>
<line x1="602.6" y1="295.38" x2="605.6" y2="295.38" stroke="#bbb" stroke-width="0.6"/>
<text x="601" y="297.28" font-family="Liberation Sans" font-size="5.3" fill="#595959" text-anchor="end">6.000</text>
<line x1="605.6" y1="278.74" x2="840.5" y2="278.74" stroke="#e8e8e8" stroke-width="0.8"/>
<line x1="602.6" y1="278.74" x2="605.6" y2="278.74" stroke="#bbb" stroke-width="0.6"/>
<text x="601" y="280.64" font-family="Liberation Sans" font-size="5.3" fill="#595959" text-anchor="end">8.000</text>
<line x1="605.6" y1="262.10" x2="840.5" y2="262.10" stroke="#e8e8e8" stroke-width="0.8"/>
<line x1="602.6" y1="262.10" x2="605.6" y2="262.10" stroke="#bbb" stroke-width="0.6"/>
<text x="601" y="264.00" font-family="Liberation Sans" font-size="5.3" fill="#595959" text-anchor="end">10.000</text>
<text x="601" y="347.20" font-family="Liberation Sans" font-size="5.3" fill="#595959" text-anchor="end">0</text>
<line x1="660.2" y1="262.1" x2="660.2" y2="347.8" stroke="#e8e8e8" stroke-width="0.8"/>
<text x="661.0" y="354.3" font-family="Liberation Sans" font-size="5.2" fill="#595959">Mar.</text>
<line x1="716.7" y1="262.1" x2="716.7" y2="347.8" stroke="#e8e8e8" stroke-width="0.8"/>
<text x="717.5" y="354.3" font-family="Liberation Sans" font-size="5.2" fill="#595959">May.</text>
<line x1="774.5" y1="262.1" x2="774.5" y2="347.8" stroke="#e8e8e8" stroke-width="0.8"/>
<text x="775.3" y="354.3" font-family="Liberation Sans" font-size="5.2" fill="#595959">Jul.</text>
<line x1="831.5" y1="262.1" x2="831.5" y2="347.8" stroke="#e8e8e8" stroke-width="0.8"/>
<text x="832.3" y="354.3" font-family="Liberation Sans" font-size="5.2" fill="#595959">Sept</text>
<line x1="605.6" y1="262.1" x2="605.6" y2="345.3" stroke="#d0d0d0" stroke-width="0.8"/>
<line x1="605.6" y1="345.3" x2="840.5" y2="345.3" stroke="#c8c8c8" stroke-width="0.8"/>
<path d="M680.0,345.3 C681.5,345.1 662.3,344.6 689.0,344.4 C715.7,344.2 815.2,344.0 840.4,343.9" fill="none" stroke="#f05a1a" stroke-width="3.3" stroke-linecap="round"/>
<path d="M654.8,345.2 C657.9,345.2 669.4,345.8 673.5,345.2 C677.6,344.6 677.5,342.8 679.3,341.3 C681.1,339.8 682.6,338.0 684.2,336.4 C685.8,334.8 687.5,332.7 689.1,331.5 C690.7,330.3 692.0,329.8 694.0,329.1 C696.0,328.5 698.1,328.1 700.9,327.6 C703.7,327.1 705.8,326.5 710.6,326.1 C715.5,325.7 723.8,325.4 730.0,325.2 C736.2,324.9 740.9,324.8 747.6,324.6 C754.3,324.4 763.0,324.3 770.0,324.0 C777.0,323.7 783.4,323.4 789.6,323.0 C795.8,322.6 803.3,322.3 807.2,321.4 C811.1,320.5 811.0,319.6 813.0,317.5 C815.0,315.4 816.9,312.4 818.9,308.7 C820.9,304.9 822.8,299.6 824.8,295.0 C826.8,290.4 828.8,285.7 830.7,281.3 C832.7,276.9 835.0,271.5 836.5,268.6 C838.0,265.7 839.0,264.5 839.5,263.7" fill="none" stroke="#f5a614" stroke-width="3.3" stroke-linecap="round"/>
<path d="M654.8,345.3 C659.4,345.3 676.3,345.8 682.3,345.3 C688.3,344.8 688.2,343.1 691.0,342.3 C693.8,341.5 696.6,341.3 698.9,340.3 C701.2,339.3 702.3,337.5 704.8,336.4 C707.2,335.3 711.0,334.4 713.6,333.5 C716.2,332.6 717.7,331.7 720.4,331.0 C723.1,330.3 725.9,329.6 730.0,329.1 C734.1,328.6 738.3,328.1 745.0,327.8 C751.7,327.5 761.9,327.6 770.0,327.3 C778.1,327.1 786.7,326.8 793.5,326.3 C800.3,325.8 805.8,325.1 811.0,324.4 C816.2,323.7 820.0,322.8 824.8,322.0 C829.5,321.2 837.0,319.9 839.5,319.5" fill="none" stroke="#3a9f0e" stroke-width="3.3" stroke-linecap="round"/>
<circle cx="606.1" cy="345.4" r="1.9" fill="#3a9f0e"/><circle cx="632.1" cy="345.4" r="1.9" fill="#3a9f0e"/>
<circle cx="605.6" cy="258.6" r="3.6" fill="#fff" stroke="#cfcfcf" stroke-width="0.6"/>
<line x1="605.0" y1="257" x2="605.0" y2="260.2" stroke="#999" stroke-width="0.4"/><line x1="606.2" y1="257" x2="606.2" y2="260.2" stroke="#999" stroke-width="0.4"/>
<circle cx="839.6" cy="258.6" r="3.6" fill="#fff" stroke="#cfcfcf" stroke-width="0.6"/>
<line x1="839.0" y1="257" x2="839.0" y2="260.2" stroke="#999" stroke-width="0.4"/><line x1="840.2" y1="257" x2="840.2" y2="260.2" stroke="#999" stroke-width="0.4"/>
<circle cx="650.1" cy="371.6" r="3.6" fill="#f5a614"/>
<text x="655.7" y="373.6" font-family="Liberation Sans" font-size="5.3" fill="#595959">Casos</text>
<circle cx="704.0" cy="371.6" r="3.6" fill="#f05a1a"/>
<text x="709.6" y="373.6" font-family="Liberation Sans" font-size="5.3" fill="#595959">Fallecidos</text>
<circle cx="757.1" cy="371.6" r="3.6" fill="#3a9f0e"/>
<text x="762.7" y="373.6" font-family="Liberation Sans" font-size="5.3" fill="#595959">Cerrado por alta</text>
<text x="762.7" y="379.20000000000005" font-family="Liberation Sans" font-size="5.3" fill="#595959">médica</text></svg>
</body></html>
